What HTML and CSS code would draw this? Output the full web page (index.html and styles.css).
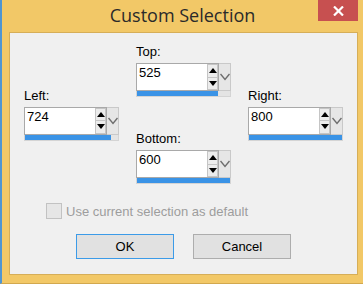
FILE: index.html
```html
<!DOCTYPE html>
<html lang="en">
<head>
    <meta charset="UTF-8">
    <title>Custom Selection</title>
    <link rel="stylesheet" href="styles.css">
</head>
<body>

    <div class="window">
        <!-- Title bar -->
        <div class="titlebar">
            <span></span>
            <h1 class="title">Custom Selection</h1>
            <button class="close-btn" aria-label="Close">
                <svg width="11" height="10" viewBox="0 0 11 10">
                    <path d="M1 0.5 L10 9.5 M10 0.5 L1 9.5" stroke="#fff" stroke-width="2.2" fill="none"/>
                </svg>
            </button>
        </div>

        <!-- Dialog body -->
        <div class="client">
            <div class="fields">
                <div class="field">
                    <label>Left:</label>
                    <div class="spin">
                        <div class="spin-row">
                            <div class="edit">
                                <span class="val">724</span>
                                <div class="arrows">
                                    <span class="arrow up"></span>
                                    <span class="arrow down"></span>
                                </div>
                            </div>
                            <div class="drop"><svg width="10" height="8" viewBox="0 0 10 8"><path d="M0.5 1 L5 6.5 L9.5 1" stroke="#6d6d6d" stroke-width="1.4" fill="none"/></svg></div>
                        </div>
                        <div class="bar"><div class="fill" style="width: 92%"></div></div>
                    </div>
                </div>

                <div class="field-stack">
                    <div class="field">
                        <label>Top:</label>
                        <div class="spin">
                            <div class="spin-row">
                                <div class="edit">
                                    <span class="val">525</span>
                                    <div class="arrows">
                                        <span class="arrow up"></span>
                                        <span class="arrow down"></span>
                                    </div>
                                </div>
                                <div class="drop"><svg width="10" height="8" viewBox="0 0 10 8"><path d="M0.5 1 L5 6.5 L9.5 1" stroke="#6d6d6d" stroke-width="1.4" fill="none"/></svg></div>
                            </div>
                            <div class="bar"><div class="fill" style="width: 87%"></div></div>
                        </div>
                    </div>

                    <div class="field">
                        <label>Bottom:</label>
                        <div class="spin">
                            <div class="spin-row">
                                <div class="edit">
                                    <span class="val">600</span>
                                    <div class="arrows">
                                        <span class="arrow up"></span>
                                        <span class="arrow down"></span>
                                    </div>
                                </div>
                                <div class="drop"><svg width="10" height="8" viewBox="0 0 10 8"><path d="M0.5 1 L5 6.5 L9.5 1" stroke="#6d6d6d" stroke-width="1.4" fill="none"/></svg></div>
                            </div>
                            <div class="bar"><div class="fill" style="width: 100%"></div></div>
                        </div>
                    </div>
                </div>

                <div class="field">
                    <label>Right:</label>
                    <div class="spin">
                        <div class="spin-row">
                            <div class="edit">
                                <span class="val">800</span>
                                <div class="arrows">
                                    <span class="arrow up"></span>
                                    <span class="arrow down"></span>
                                </div>
                            </div>
                            <div class="drop"><svg width="10" height="8" viewBox="0 0 10 8"><path d="M0.5 1 L5 6.5 L9.5 1" stroke="#6d6d6d" stroke-width="1.4" fill="none"/></svg></div>
                        </div>
                        <div class="bar"><div class="fill" style="width: 100%"></div></div>
                    </div>
                </div>
            </div>

            <!-- Default checkbox (disabled) -->
            <div class="check-row">
                <span class="checkbox"></span>
                <span class="check-label">Use current selection as default</span>
            </div>

            <!-- Buttons -->
            <div class="buttons">
                <button class="btn btn-default">OK</button>
                <button class="btn">Cancel</button>
            </div>
        </div>
    </div>

</body>
</html>
```

FILE: styles.css
```css
body {
    margin: 0;
    font-family: "Liberation Sans", Arial, sans-serif;
    font-size: 13px;
    background-color: #f2c867;
}

.window {
    width: 363px;
    height: 284px;
    box-sizing: border-box;
    background-color: #f2c867;
    border-left: 2px solid #4f95d2;
    border-bottom: 1px solid #d2a84e;
}

/* Title bar */
.titlebar {
    display: grid;
    grid-template-columns: 1fr auto 1fr;
    height: 32px;
}

.title {
    margin: 0;
    padding-top: 2px;
    font-family: "Open Sans", "Noto Sans", sans-serif;
    font-size: 18px;
    font-weight: normal;
    color: #2a2a2a;
    line-height: 26px;
}

.close-btn {
    justify-self: end;
    width: 40px;
    height: 21px;
    margin-right: 5px;
    padding: 0;
    border: none;
    background-color: #c75050;
    display: flex;
    align-items: center;
    justify-content: center;
}

/* Client area */
.client {
    margin-left: 7px;
    width: 349px;
    height: 243px;
    box-sizing: border-box;
    background-color: #f0f0f0;
    border: 1px solid #d6ae58;
    padding: 12px 14px 0 14px;
}

.fields {
    display: flex;
    align-items: center;
    gap: 17px;
}

.field-stack {
    display: flex;
    flex-direction: column;
    gap: 35px;
}

.field label {
    display: block;
    line-height: 14px;
    margin-bottom: 4px;
    color: #000;
}

/* Spin control */
.spin {
    width: 95px;
}

.spin-row {
    display: flex;
    height: 28px;
}

.edit {
    width: 83px;
    box-sizing: border-box;
    border: 1px solid #a9a9a9;
    background-color: #fff;
    display: flex;
    justify-content: space-between;
}

.val {
    padding: 2px 0 0 2px;
    line-height: 14px;
    color: #000;
}

.arrows {
    width: 11px;
    display: flex;
    flex-direction: column;
}

.arrow {
    flex: 1;
    border: 1px solid #c5c5c5;
    background-color: #ececec;
    display: flex;
    align-items: center;
    justify-content: center;
}

.arrow.up {
    border-bottom: none;
}

.arrow.up::before {
    content: "";
    border-left: 4px solid transparent;
    border-right: 4px solid transparent;
    border-bottom: 5px solid #000;
}

.arrow.down::before {
    content: "";
    border-left: 4px solid transparent;
    border-right: 4px solid transparent;
    border-top: 5px solid #000;
}

.drop {
    width: 12px;
    box-sizing: border-box;
    background-color: #e6e6e6;
    border: 1px solid #c9c9c9;
    border-left: none;
    display: flex;
    align-items: center;
    justify-content: center;
}

.bar {
    height: 5px;
    background-color: #e4e4e4;
    border: 1px solid #d4d4d4;
    border-top: none;
}

.fill {
    height: 100%;
    background-color: #3a93e6;
}

/* Checkbox row */
.check-row {
    display: flex;
    align-items: center;
    gap: 4px;
    margin-top: 19px;
    margin-left: 22px;
}

.checkbox {
    width: 16px;
    height: 16px;
    box-sizing: border-box;
    border: 1px solid #c2c2c2;
    background-color: #e6e6e6;
}

.check-label {
    color: #9d9d9d;
}

/* Buttons */
.buttons {
    display: flex;
    justify-content: center;
    gap: 19px;
    margin-top: 15px;
}

.btn {
    width: 98px;
    height: 25px;
    font-family: "Liberation Sans", Arial, sans-serif;
    font-size: 13px;
    color: #000;
    background-color: #e1e1e1;
    border: 1px solid #adadad;
    padding: 0;
}

.btn-default {
    border-color: #3c9be8;
}
```
